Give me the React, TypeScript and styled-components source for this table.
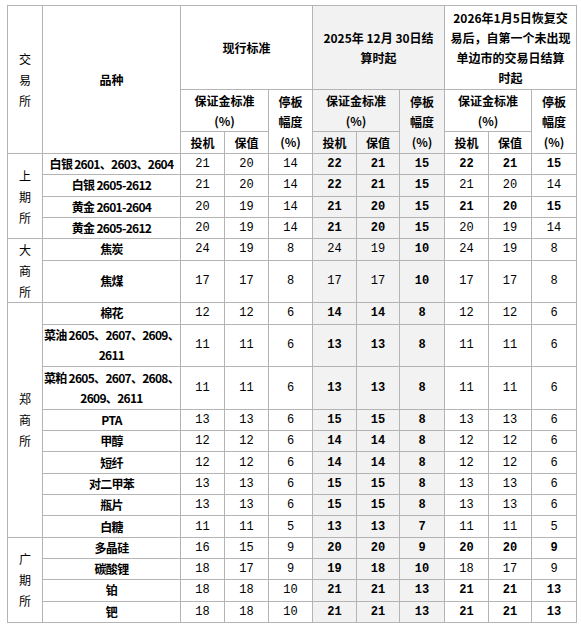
import React, {FC} from "react";
import styled, {createGlobalStyle} from 'styled-components';

type Row = {
    name: React.ReactNode;
    units?: number;
    vals: number[];
    bold: string;
};

type Group = {
    exchange: string;
    rows: Row[];
};

const groups: Group[] = [
    {
        exchange: '上期所',
        rows: [
            {name: '白银 2601、2603、2604', vals: [21, 20, 14, 22, 21, 15, 22, 21, 15], bold: '000111111'},
            {name: '白银 2605-2612', vals: [21, 20, 14, 22, 21, 15, 21, 20, 14], bold: '000111000'},
            {name: '黄金 2601-2604', vals: [20, 19, 14, 21, 20, 15, 21, 20, 15], bold: '000111111'},
            {name: '黄金 2605-2612', vals: [20, 19, 14, 21, 20, 15, 20, 19, 14], bold: '000111000'},
        ],
    },
    {
        exchange: '大商所',
        rows: [
            {name: '焦炭', vals: [24, 19, 8, 24, 19, 10, 24, 19, 8], bold: '000001000'},
            {name: '焦煤', units: 2, vals: [17, 17, 8, 17, 17, 10, 17, 17, 8], bold: '000001000'},
        ],
    },
    {
        exchange: '郑商所',
        rows: [
            {name: '棉花', vals: [12, 12, 6, 14, 14, 8, 12, 12, 6], bold: '000111000'},
            {name: <>菜油 2605、2607、2609、<br/>2611</>, units: 2, vals: [11, 11, 6, 13, 13, 8, 11, 11, 6], bold: '000111000'},
            {name: <>菜粕 2605、2607、2608、<br/>2609、2611</>, units: 2, vals: [11, 11, 6, 13, 13, 8, 11, 11, 6], bold: '000111000'},
            {name: 'PTA', vals: [13, 13, 6, 15, 15, 8, 13, 13, 6], bold: '000111000'},
            {name: '甲醇', vals: [12, 12, 6, 14, 14, 8, 12, 12, 6], bold: '000111000'},
            {name: '短纤', vals: [12, 12, 6, 14, 14, 8, 12, 12, 6], bold: '000111000'},
            {name: '对二甲苯', vals: [13, 13, 6, 15, 15, 8, 13, 13, 6], bold: '000111000'},
            {name: '瓶片', vals: [13, 13, 6, 15, 15, 8, 13, 13, 6], bold: '000111000'},
            {name: '白糖', vals: [11, 11, 5, 13, 13, 7, 11, 11, 5], bold: '000111000'},
        ],
    },
    {
        exchange: '广期所',
        rows: [
            {name: '多晶硅', vals: [16, 15, 9, 20, 20, 9, 20, 20, 9], bold: '000111111'},
            {name: '碳酸锂', vals: [18, 17, 9, 19, 18, 10, 18, 17, 9], bold: '000111000'},
            {name: '铂', vals: [18, 18, 10, 21, 21, 13, 21, 21, 13], bold: '000111111'},
            {name: '钯', vals: [18, 18, 10, 21, 21, 13, 21, 21, 13], bold: '000111111'},
        ],
    },
];

const colWidths = [35, 138, 44, 44, 44, 44, 43, 45, 44, 43, 45];
const UNIT = 21.32;

export default function App() {
    return (
        <>
            <GlobalStyle/>
            <MarginTable/>
        </>
    );
}

const MarginTable: FC = () => (
    <Table>
        <colgroup>
            {colWidths.map((w, i) => <col key={i} style={{width: w}}/>)}
        </colgroup>
        <thead>
            <Tr $h={84}>
                <ExchangeCell rowSpan={3}>交易所</ExchangeCell>
                <Cell rowSpan={3} $bold>品种</Cell>
                <Cell colSpan={3} $bold>现行标准</Cell>
                <Cell colSpan={3} $bold $shade>2025年 12月 30日结<br/>算时起</Cell>
                <Cell colSpan={3} $bold>2026年1月5日恢复交<br/>易后，自第一个未出现<br/>单边市的交易日结算<br/>时起</Cell>
            </Tr>
            <Tr $h={42}>
                {[false, true, false].map((shade, i) => (
                    <React.Fragment key={i}>
                        <Cell colSpan={2} $bold $shade={shade}>保证金标准<br/>(%)</Cell>
                        <Cell rowSpan={2} $bold $shade={shade}>停板<br/>幅度<br/>(%)</Cell>
                    </React.Fragment>
                ))}
            </Tr>
            <Tr $h={22}>
                {[false, true, false].map((shade, i) => (
                    <React.Fragment key={i}>
                        <Cell $bold $shade={shade}>投机</Cell>
                        <Cell $bold $shade={shade}>保值</Cell>
                    </React.Fragment>
                ))}
            </Tr>
        </thead>
        <tbody>
            {groups.map(group => group.rows.map((row, i) => (
                <Tr key={group.exchange + i} $h={(row.units || 1) * UNIT}>
                    {i === 0 && <ExchangeCell rowSpan={group.rows.length}>{group.exchange}</ExchangeCell>}
                    <NameCell $bold>{row.name}</NameCell>
                    {row.vals.map((v, j) => (
                        <NumCell key={j} $bold={row.bold[j] === '1'} $shade={j >= 3 && j < 6}>{v}</NumCell>
                    ))}
                </Tr>
            )))}
        </tbody>
    </Table>
);

const GlobalStyle = createGlobalStyle`
  body {
    margin: 5px 0 0 7px;
    background: #fff;
    font-family: "Noto Sans CJK SC", "Liberation Sans", sans-serif;
    color: #000;
  }
`;

const Table = styled.table`
  border-collapse: collapse;
  table-layout: fixed;
  width: 570px;
  font-size: 12px;
`;

const Tr = styled.tr<{ $h: number }>`
  height: ${p => p.$h}px;
`;

const Cell = styled.td<{ $bold?: boolean; $shade?: boolean }>`
  border: 1px solid #b4b4b4;
  padding: 0 2px;
  text-align: center;
  vertical-align: middle;
  line-height: 20px;
  font-weight: ${p => p.$bold ? 700 : 400};
  background: ${p => p.$shade ? '#f2f2f2' : '#fff'};
  white-space: nowrap;
`;

const NameCell = styled(Cell)`
  letter-spacing: -0.7px;
  padding: 0;
`;

const NumCell = styled(Cell)`
  font-family: "Liberation Mono", "DejaVu Sans Mono", monospace;
  font-size: 12px;
`;

const ExchangeCell = styled(Cell)`
  padding: 0 8px;
  white-space: normal;
  line-height: 21px;
`;
